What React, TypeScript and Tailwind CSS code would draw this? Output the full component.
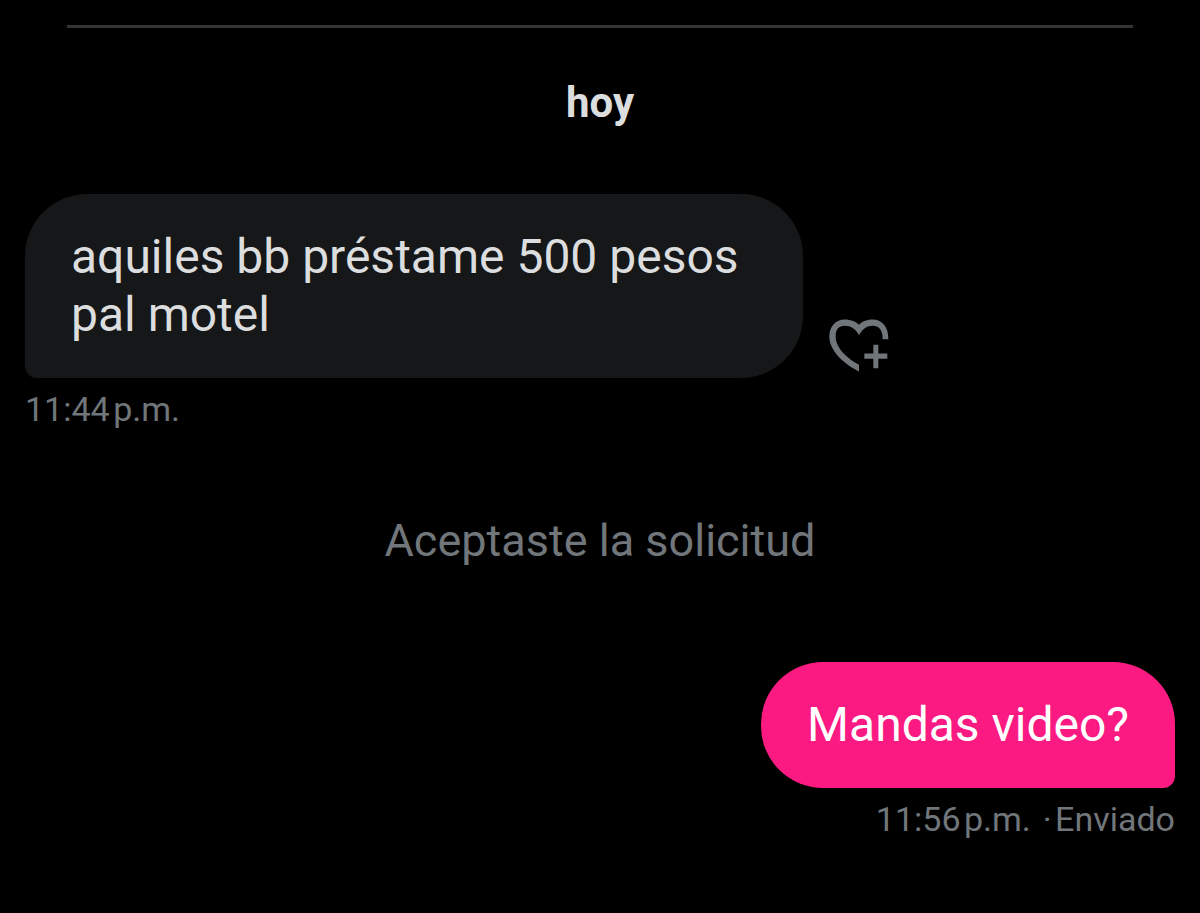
import React from 'react';
import clsx from 'clsx';

interface BubbleProps {
  text: string;
  meta: string;
  own?: boolean;
  children?: React.ReactNode;
}

const HeartPlusIcon: React.FC = () => (
  <svg viewBox="56 58 180 158" className="h-[53px] w-[60px]" fill="currentColor" aria-hidden="true">
    <path d="M217 118H234C235 80 214 59 187 59C168 59 154 66 146 75C138 66 122 59 103 59C76 59 57 80 57 110C57 155 104 194 146 215V195C112 176 76 146 76 110C76 88 86 78 103 78C122 78 134 86 146 106C158 86 170 78 187 78C206 78 217 90 217 118Z" />
    <path d="M189 135H204V161H231V177H204V205H189V177H162V161H189Z" />
  </svg>
);

const Bubble: React.FC<BubbleProps> = ({ text, meta, own = false, children }) => (
  <article className={clsx('flex flex-col', own ? 'items-end' : 'items-start')}>
    <div className="flex items-end gap-[26px]">
      <p
        className={clsx(
          'max-w-[778px] rounded-t-[62px] px-[46px] py-[34px] text-[48px] leading-[58px]',
          own
            ? 'rounded-bl-[62px] rounded-br-[12px] bg-[#fb1a82] text-white'
            : 'rounded-br-[62px] rounded-bl-[12px] bg-[#161718] text-[#dcddde]'
        )}
      >
        {text}
      </p>
      {children}
    </div>
    <p className="mt-[10px] text-[34px] leading-[42px] text-[#71767b]">{meta}</p>
  </article>
);

const App: React.FC = () => (
  <main className="min-h-screen bg-black px-[25px] pt-[25px] font-['Roboto',sans-serif]">
    <hr className="mx-[42px] border-t-[3px] border-[#333436]" />
    <h2 className="mt-[50px] text-center text-[42px] leading-[50px] font-bold text-[#dcddde]">hoy</h2>

    <section className="mt-[66px]">
      <Bubble text="aquiles bb préstame 500 pesos pal motel" meta={'11:44\u200ap.m.'}>
        <button type="button" aria-label="Reaccionar" className="mb-[6px] shrink-0 text-[#71767b]">
          <HeartPlusIcon />
        </button>
      </Bubble>

      <p className="mt-[83px] mb-[93px] text-center text-[45px] leading-[56px] text-[#71767b]">
        Aceptaste la solicitud
      </p>

      <Bubble own text="Mandas video?" meta={'11:56\u200ap.m. \u200a·\u200aEnviado'} />
    </section>
  </main>
);

export default App;
